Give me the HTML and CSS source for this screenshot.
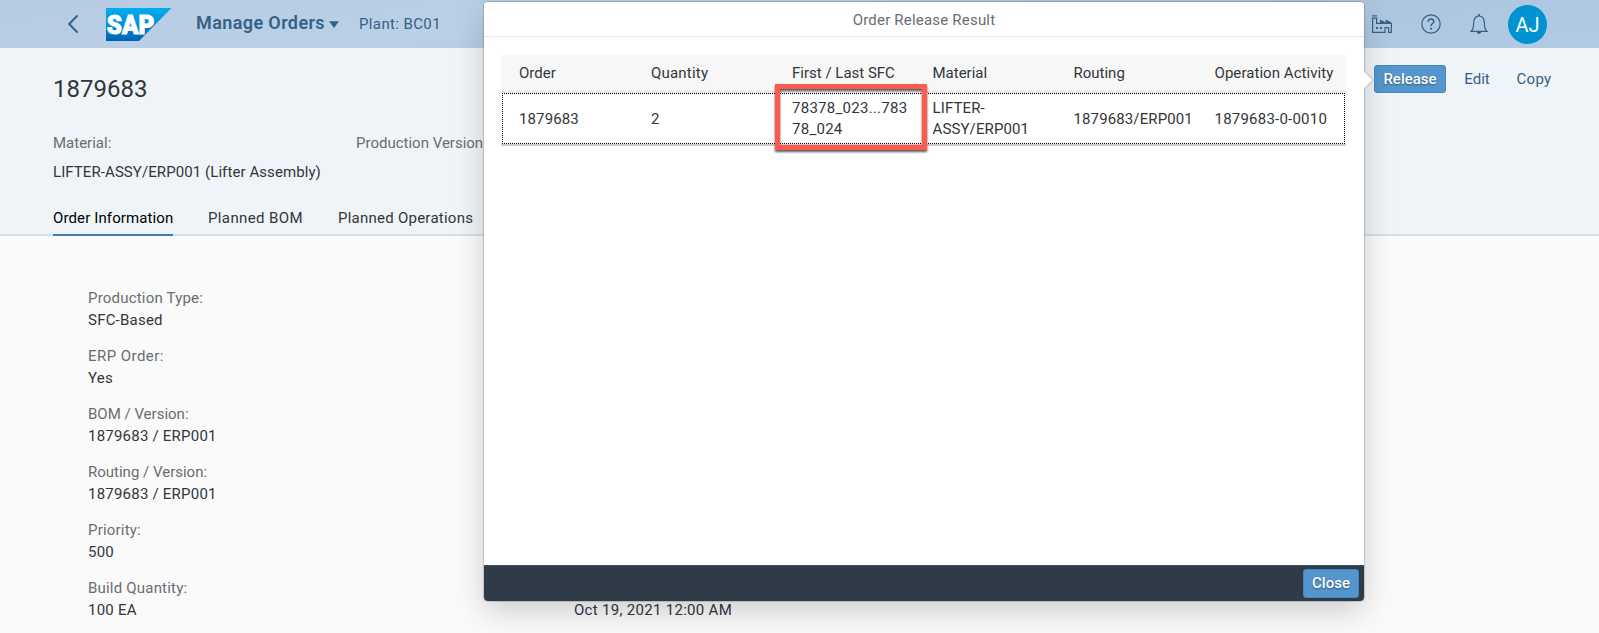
FILE: index.html
```
<!DOCTYPE html>
<html lang="en">
<head>
<meta charset="utf-8">
<title>Manage Orders</title>
<link rel="stylesheet" href="styles.css">
</head>
<body>
<header class="shell">
  <svg class="back" width="12" height="20" viewBox="0 0 12 20"><path d="M10 2 L2.2 10 L10 18" fill="none" stroke="#346187" stroke-width="2" stroke-linecap="round"/></svg>
  <svg class="logo" width="66" height="33" viewBox="0 0 66 33">
    <defs><linearGradient id="lg" x1="0" y1="0" x2="0" y2="1"><stop offset="0" stop-color="#00aeef"/><stop offset=".5" stop-color="#0091d9"/><stop offset="1" stop-color="#0062b1"/></linearGradient></defs>
    <path d="M0 0H65.5L33 33H0Z" fill="url(#lg)"/>
    <text class="logo-text" x="0.8" y="26" textLength="47.5" lengthAdjust="spacingAndGlyphs">SAP</text>
  </svg>
  <span class="app-title">Manage Orders</span>
  <svg class="caret" width="10" height="7" viewBox="0 0 10 7"><path d="M0 .3H10L5 7Z" fill="#346187"/></svg>
  <span class="plant">Plant: BC01</span>
  <div class="shell-end">
    <svg width="20" height="19" viewBox="0 0 20 19" fill="none" stroke="#346187" stroke-width="1.2">
      <path d="M.6 3.2V17.4H13V12.6H16.6V17.4H19.4V8.4H4.6V3.2Z"/><path d="M0 .9H5"/>
      <path d="M8 4.6L13 7V8H8ZM13.6 4.6L18.8 7V8H13.6Z" fill="#346187" stroke="none"/>
      <path d="M4 13H6M8 13H10" stroke-width="2"/>
    </svg>
    <svg width="20" height="20" viewBox="0 0 20 20" fill="none" stroke="#346187" stroke-width="1.2">
      <circle cx="10" cy="10" r="9.2"/><path d="M7.2 7.7C7.2 5.9 8.4 4.9 10 4.9S12.8 6 12.8 7.5C12.8 9.5 10 9.6 10 12.1" stroke-width="1.5"/><circle cx="10" cy="14.7" r="1.1" fill="#346187" stroke="none"/>
    </svg>
    <svg width="18" height="20" viewBox="0 0 18 20" fill="none" stroke="#346187" stroke-width="1.2">
      <path d="M1 17.4C3.2 15.4 3.6 13 3.6 9.4C3.6 5 5.4 2 9 2S14.4 5 14.4 9.4C14.4 13 14.8 15.4 17 17.4Z"/><path d="M9 0V2" stroke-width="1.8"/><path d="M6.8 18H11.2C11 20.6 7 20.6 6.8 18Z" fill="#346187" stroke="none"/>
    </svg>
    <span class="avatar">AJ</span>
  </div>
</header>

<section class="object-header">
  <div class="title-row">
    <h1 class="object-title">1879683</h1>
    <div class="actions">
      <button class="btn btn-emph">Release</button>
      <button class="btn edit">Edit</button>
      <button class="btn copy">Copy</button>
    </div>
  </div>
  <div class="facets">
    <div class="facet">
      <span class="label">Material:</span>
      <span class="facet-value">LIFTER-ASSY/ERP001 (Lifter Assembly)</span>
    </div>
    <div class="facet"><span class="label">Production Version</span></div>
  </div>
  <nav class="tabs">
    <a class="tab tab-active">Order Information</a>
    <a class="tab tab-bom">Planned BOM</a>
    <a class="tab tab-ops">Planned Operations</a>
  </nav>
</section>

<main class="content">
  <dl class="form">
    <div class="field"><dt>Production Type:</dt><dd>SFC-Based</dd></div>
    <div class="field"><dt class="wide">ERP Order:</dt><dd>Yes</dd></div>
    <div class="field"><dt class="tight">BOM / Version:</dt><dd>1879683 / ERP001</dd></div>
    <div class="field"><dt class="tight">Routing / Version:</dt><dd>1879683 / ERP001</dd></div>
    <div class="field"><dt>Priority:</dt><dd>500</dd></div>
    <div class="field"><dt>Build Quantity:</dt><dd>100 EA</dd></div>
  </dl>
  <span class="date">Oct 19, 2021 12:00 AM</span>
</main>

<div class="dialog" role="dialog">
  <span class="arrow"></span>
  <div class="dialog-title"><span>Order Release Result</span></div>
  <div class="dialog-body">
    <div class="row row-head">
      <span>Order</span><span class="qty">Quantity</span><span>First / Last SFC</span><span>Material</span><span>Routing</span><span class="col-op">Operation Activity</span>
    </div>
    <div class="row row-data">
      <span>1879683</span><span>2</span><span class="sfc">78378_023...783<br>78_024</span><span class="material">LIFTER-<br>ASSY/ERP001</span><span>1879683/ERP001</span><span class="activity">1879683-0-0010</span>
      <i class="focus"></i>
      <i class="marker"></i>
    </div>
  </div>
  <div class="dialog-footer"><button class="btn btn-emph close">Close</button></div>
</div>
</body>
</html>
```
FILE: styles.css
```
* { box-sizing: border-box; }
body {
  margin: 0; width: 1599px; height: 633px; overflow: hidden; position: relative;
  display: flex; flex-direction: column;
  font: 15px/22px Roboto, "Liberation Sans", sans-serif;
  color: #32363a; background: #fafafa; white-space: nowrap;
}
.shell {
  height: 48px; flex: none; display: flex; align-items: center; padding-left: 67px;
  background: linear-gradient(170deg, #b7cce3 0%, #bad0e7 32%, #adc6e0 70%, #b2cae4 100%);
  color: #346187;
}
.logo { margin-left: 27px; }
.logo-text { font: 900 26px Roboto, sans-serif; fill: #fff; stroke: #fff; stroke-width: 1px; }
.app-title { margin-left: 24px; width: 127px; padding-bottom: 2px; font-size: 18px; font-weight: 600; letter-spacing: .4px; }
.caret { margin-left: 6px; }
.plant { margin-left: 20px; letter-spacing: .38px; }
.shell-end { margin-left: auto; margin-right: 52px; display: flex; align-items: center; gap: 29px; }
.avatar { width: 39px; height: 39px; margin-left: -9px; border-radius: 50%; background: #0092d1; color: #fff; font-size: 20px; line-height: 40px; text-align: center; }

.object-header { height: 188px; flex: none; background: #eff4f9; border-bottom: 2px solid #d1e0ee; padding-left: 53px; }
.title-row { height: 62px; padding-top: 17px; display: flex; justify-content: space-between; }
.object-title { margin: 0; padding-top: 9px; font-size: 24px; line-height: 30px; font-weight: 400; }
.actions { display: flex; padding-right: 47px; }
.btn { font: inherit; height: 28px; padding: 0; border: 0; background: none; color: #346187; }
.btn-emph { width: 72px; border: 1px solid #4387c2; border-radius: 3px; background: #5496cd; color: #fff; font-weight: 500; text-shadow: 0 1px 2px rgba(0,0,0,.45); }
.edit { margin-left: 18px; width: 26px; }
.copy { margin-left: 26px; width: 36px; letter-spacing: .3px; }
.facets { display: grid; grid-template-columns: 303px auto; margin-top: 22px; }
.facet { display: flex; flex-direction: column; gap: 7px; }
.facet-value { letter-spacing: .08px; }
.label, .form dt { color: #6a6d70; }
.tabs { display: flex; gap: 35px; margin-top: 18px; }
.tab { height: 35px; padding-top: 6px; }
.tab-active { width: 120px; letter-spacing: .12px; color: #000; border-bottom: 2px solid #427cac; }
.tab-bom { letter-spacing: .38px; }
.tab-ops { letter-spacing: .25px; }

.content { display: flex; align-items: flex-end; padding: 51px 0 0 88px; }
.form { margin: 0; width: 486px; display: flex; flex-direction: column; gap: 14px; }
.form dt { letter-spacing: .2px; }
.form dt.tight { letter-spacing: 0; }
.form dt.wide { letter-spacing: .45px; }
.form dd { margin: 0; letter-spacing: .22px; }
.date { letter-spacing: .3px; }

.dialog {
  position: absolute; left: 484px; top: 2px; width: 880px; height: 599px;
  display: flex; flex-direction: column; background: #fff; border-radius: 4px;
  box-shadow: 0 0 0 1px rgba(0,0,0,.15), 0 10px 30px rgba(0,0,0,.18);
}
.arrow { position: absolute; right: -6px; top: 72px; width: 12px; height: 12px; background: #fff; transform: rotate(45deg); box-shadow: 1px -1px 1px rgba(0,0,0,.15); }
.dialog-title { height: 35px; flex: none; border-bottom: 1px solid #e5e5e5; color: #6a6d70; text-align: center; line-height: 36px; letter-spacing: .2px; position: relative; background: #fff; border-radius: 4px 4px 0 0; }
.dialog-body { flex: 1; padding: 18px 18px 0 17px; background: #fff; position: relative; }
.row { display: grid; grid-template-columns: 132px 141px 140.5px 141px 141px auto; padding-left: 18px; align-items: center; }
.row-head { height: 38px; background: #f7f7f7; border-bottom: 2px solid #e5e5e5; padding-bottom: 1px; }
.qty { letter-spacing: .2px; }
.col-op { letter-spacing: .06px; }
.row-data { height: 53px; position: relative; border-bottom: 2px solid #ccc; padding-top: 1px; line-height: 21px; letter-spacing: .12px; }
.sfc { letter-spacing: .27px; }
.activity { letter-spacing: .22px; }
.focus { position: absolute; left: 1px; right: 1px; top: 0; bottom: 0; border: 1px dotted #000; }
.marker { position: absolute; left: 274px; top: -9px; width: 152px; height: 66px; border: 5px solid #ff5a4f; filter: drop-shadow(0 2px 1px rgba(0,0,0,.65)); }
.dialog-footer { height: 36px; flex: none; background: #2f3c48; border-top: 1px solid #445562; border-radius: 0 0 4px 4px; display: flex; justify-content: flex-end; padding: 3px 5px 0 0; position: relative; }
.close { width: 56px; height: 29px; padding-bottom: 2px; }
```
